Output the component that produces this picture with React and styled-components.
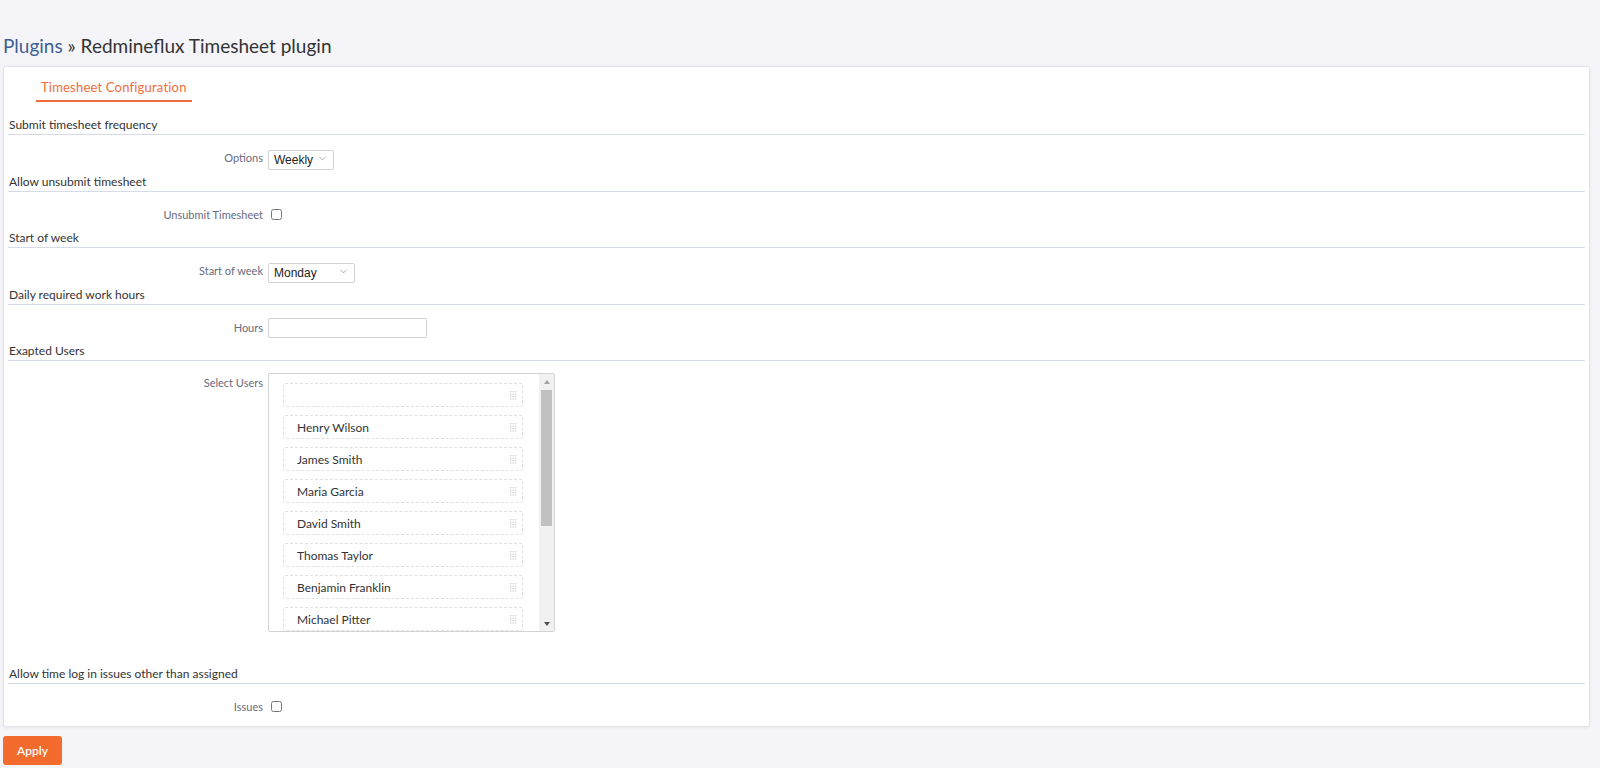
import React from "react";
import styled, { createGlobalStyle } from "styled-components";
import { ChevronDown } from "lucide-react";

const GlobalStyle = createGlobalStyle`
  html, body {
    margin: 0;
    padding: 0;
    background: #f5f5f9;
    font-family: "Lato", "Noto Sans", sans-serif;
    color: #333;
  }
  * { box-sizing: border-box; }
`;

const users = [
  "",
  "Henry Wilson",
  "James Smith",
  "Maria Garcia",
  "David Smith",
  "Thomas Taylor",
  "Benjamin Franklin",
  "Michael Pitter",
];

function App() {
  return (
    <>
      <GlobalStyle />
      <Page>
        <Title>
          <Crumb href="#">Plugins</Crumb> » Redmineflux Timesheet plugin
        </Title>
        <Box>
          <Tabs>
            <Tab>Timesheet Configuration</Tab>
          </Tabs>

          <SectionHead>Submit timesheet frequency</SectionHead>
          <Row>
            <Label>Options</Label>
            <SelectWrap $width={66}>
              <Select defaultValue="Weekly">
                <option>Weekly</option>
                <option>Monthly</option>
              </Select>
              <Chevron size={11} strokeWidth={1.5} />
            </SelectWrap>
          </Row>

          <SectionHead>Allow unsubmit timesheet</SectionHead>
          <Row>
            <Label>Unsubmit Timesheet</Label>
            <Check type="checkbox" />
          </Row>

          <SectionHead>Start of week</SectionHead>
          <Row>
            <Label>Start of week</Label>
            <SelectWrap $width={87}>
              <Select defaultValue="Monday">
                <option>Monday</option>
                <option>Sunday</option>
              </Select>
              <Chevron size={11} strokeWidth={1.5} />
            </SelectWrap>
          </Row>

          <SectionHead>Daily required work hours</SectionHead>
          <Row>
            <Label>Hours</Label>
            <TextInput type="text" />
          </Row>

          <SectionHead>Exapted Users</SectionHead>
          <Row $top={12} $bottom={33}>
            <Label>Select Users</Label>
            <UserList>
              <UserItems>
                {users.map((name, i) => (
                  <UserItem key={i}>
                    <span>{name}</span>
                    <Handle width="7" height="9" viewBox="0 0 7 9">
                      {[0, 1, 2, 3].map((r) =>
                        [0, 1, 2].map((c) => (
                          <rect key={`${r}-${c}`} x={c * 2.5} y={r * 2.4} width="1.3" height="1.3" fill="#cfcfcf" />
                        ))
                      )}
                    </Handle>
                  </UserItem>
                ))}
              </UserItems>
              <Scrollbar>
                <ScrollArrow $up />
                <ScrollTrack>
                  <ScrollThumb />
                </ScrollTrack>
                <ScrollArrow />
              </Scrollbar>
            </UserList>
          </Row>

          <SectionHead>Allow time log in issues other than assigned</SectionHead>
          <Row $bottom={9}>
            <Label>Issues</Label>
            <Check type="checkbox" />
          </Row>
        </Box>
        <ApplyButton>Apply</ApplyButton>
      </Page>
    </>
  );
}

export default App;

const Page = styled.div`
  padding: 34px 10px 4px 3px;
  min-height: 768px;
`;

const Title = styled.h2`
  margin: 0 0 9px 0;
  font-size: 19px;
  line-height: 23px;
  font-weight: 400;
  color: #333;
`;

const Crumb = styled.a`
  color: #3d5f94;
  text-decoration: none;
`;

const Box = styled.div`
  background: #fff;
  border: 1px solid #e3e3e8;
  border-radius: 3px;
  box-shadow: 0 1px 3px rgba(0, 0, 0, 0.06);
  padding: 0 4px;
`;

const Tabs = styled.div`
  display: flex;
  padding: 12px 0 0 28px;
  margin-bottom: 14px;
`;

const Tab = styled.div`
  padding: 0 5px 4px;
  font-size: 13px;
  letter-spacing: 0.2px;
  line-height: 17px;
  color: #f26b3a;
  border-bottom: 2px solid #f26b3a;
`;

const SectionHead = styled.div`
  font-size: 12px;
  line-height: 18px;
  color: #333;
  padding-left: 1px;
  border-bottom: 1px solid #d6dbea;
`;

const Row = styled.div`
  display: grid;
  grid-template-columns: 255px 1fr;
  column-gap: 5px;
  align-items: start;
  padding: ${(p) => p.$top ?? 13}px 0 ${(p) => p.$bottom ?? 4.6}px 0;
`;

const Label = styled.label`
  text-align: right;
  font-size: 11px;
  line-height: 20px;
  color: #676b80;
`;

const SelectWrap = styled.div`
  position: relative;
  width: ${(p) => p.$width}px;
  height: 20px;
`;

const Select = styled.select`
  appearance: none;
  width: 100%;
  height: 20px;
  border: 1px solid #d3d3d3;
  border-radius: 2px;
  background: #fff;
  padding: 0 0 0 5px;
  font-family: "Liberation Sans", Arial, sans-serif;
  font-size: 12px;
  color: #222;
  outline: none;
`;

const Chevron = styled(ChevronDown)`
  position: absolute;
  right: 6px;
  top: 5px;
  color: #888;
  pointer-events: none;
`;

const Check = styled.input`
  width: 11px;
  height: 11px;
  margin: 4px 0 0 3px;
  accent-color: #555;
`;

const TextInput = styled.input`
  width: 159px;
  height: 20px;
  border: 1px solid #d3d3d3;
  border-radius: 2px;
  padding: 0 4px;
  outline: none;
`;

const UserList = styled.div`
  width: 287px;
  height: 259px;
  border: 1px solid #d3d3d3;
  border-radius: 2px;
  display: flex;
  overflow: hidden;
`;

const UserItems = styled.div`
  flex: 1;
  overflow: hidden;
  padding: 9px 0 0 14px;
  display: flex;
  flex-direction: column;
  gap: 8px;
`;

const UserItem = styled.div`
  flex: 0 0 24px;
  width: 240px;
  display: flex;
  align-items: center;
  justify-content: space-between;
  border: 1px dashed #dde1e6;
  border-radius: 2px;
  padding: 0 5px 0 13px;
  font-size: 12px;
  color: #333;
`;

const Handle = styled.svg`
  flex: none;
`;

const Scrollbar = styled.div`
  flex: 0 0 15px;
  display: flex;
  flex-direction: column;
  background: #f1f1f1;
`;

const ScrollArrow = styled.div`
  flex: 0 0 15px;
  display: flex;
  align-items: center;
  justify-content: center;

  &::after {
    content: "";
    border-left: 3.5px solid transparent;
    border-right: 3.5px solid transparent;
    ${(p) =>
      p.$up
        ? "border-bottom: 4px solid #a3a3a3;"
        : "border-top: 4px solid #505050;"}
  }
`;

const ScrollTrack = styled.div`
  flex: 1;
  padding: 1px 2px 0;
`;

const ScrollThumb = styled.div`
  height: 136px;
  background: #c1c1c1;
`;

const ApplyButton = styled.button`
  margin-top: 9px;
  width: 59px;
  height: 29px;
  background: #f46b2e;
  color: #fff;
  border: none;
  border-radius: 3px;
  font-family: "Lato", sans-serif;
  font-size: 12px;
  font-weight: 600;
  cursor: pointer;
`;
